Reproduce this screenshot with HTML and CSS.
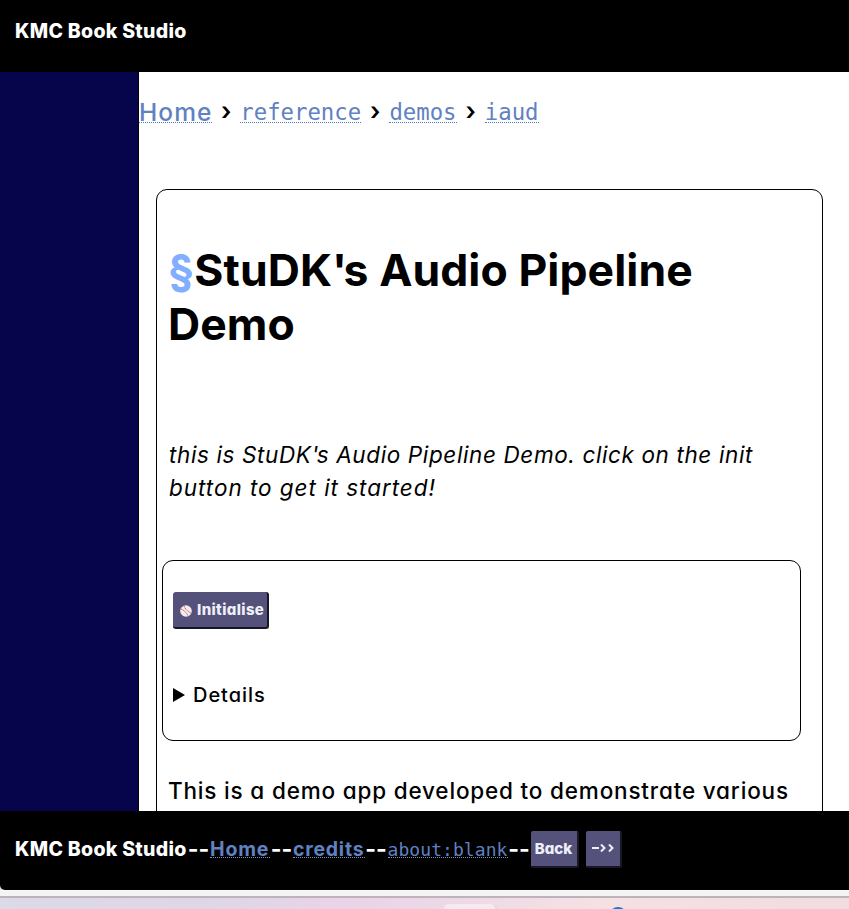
FILE: index.html
```html
<!DOCTYPE html>
<html lang="en">
<head>
<meta charset="utf-8">
<title>KMC Book Studio</title>
<link rel="stylesheet" href="styles.css">
</head>
<body>
<header class="topbar"><span class="brand">KMC Book Studio</span></header>
<div class="workspace">
  <aside class="sidebar"></aside>
  <main class="content">
    <nav class="crumbs"><a class="home">Home</a><i class="sep">›</i><a class="code">reference</a><i class="sep">›</i><a class="code">demos</a><i class="sep">›</i><a class="code">iaud</a></nav>
    <article class="card">
      <h1><a class="mark">§</a>StuDK<span class="apos">'</span>s Audio Pipeline<br>Demo</h1>
      <p class="intro">this is StuDK<span class="apos-small">'</span>s Audio Pipeline Demo. click on the init<br><span class="intro-end">button to get it started!</span></p>
      <section class="panel">
        <button class="btn init"><svg class="ball" viewBox="0 0 12 12"><circle cx="6" cy="6" r="5.8" fill="#f0edf0"/><path d="M.7 4C3.500 4.500 7.500 8.500 8 11.200M4 .8C4.500 3.500 8.500 7.500 11.300 8" fill="none" stroke="#d8574f" stroke-width="1" stroke-dasharray="1.500 .6"/></svg><span>Initialise</span></button>
        <div class="details"><svg viewBox="0 0 12 14"><path d="M0 0L12 7L0 14Z"/></svg><span>Details</span></div>
      </section>
      <p class="about">This is a demo app developed to demonstrate various</p>
    </article>
  </main>
</div>
<footer class="bottombar"><span class="brand">KMC Book Studio</span><span class="dash">--</span><a class="flink fhome">Home</a><span class="dash">--</span><a class="flink fcredits">credits</a><span class="dash">--</span><a class="flink blank">about:blank</a><span class="dash">--</span><button class="btn back">Back</button><button class="btn forward"><svg viewBox="0 0 24 12"><path d="M1 6H8M10 2.500L13.500 6L10 9.500M18 2.500L21.500 6L18 9.500" fill="none" stroke="#efeff8" stroke-width="2"/></svg></button></footer>
<div class="window-edge"></div>
<div class="taskbar"><div class="tab"></div><div class="app-icon"></div></div>
</body>
</html>
```
FILE: styles.css
```css
* { box-sizing: border-box; }
html, body { height: 100%; margin: 0; }
body { display: flex; flex-direction: column; overflow: hidden; background: #e6dbe8; color: #000; font-family: Inter, "Liberation Sans", sans-serif; font-feature-settings: "cv11"; white-space: nowrap; }
.topbar { height: 72px; flex: none; background: #000; color: #fff; padding: 17px 15px; }
.brand { display: inline-block; width: 172px; font-size: 19.5px; font-weight: 800; line-height: 28px; letter-spacing: .3px; }
.workspace { display: flex; height: 739px; flex: none; background: #fff; overflow: hidden; }
.sidebar { width: 139px; flex: none; background: #06054b; border-right: 1px solid #000; }
.content { flex: 1; padding-top: 20px; }
.crumbs { display: flex; height: 40px; line-height: 40px; align-items: center; }
.crumbs a { color: #6081c2; line-height: 26px; height: 24px; margin-top: -3px; border-bottom: 1px dotted #5577bb; }
.crumbs .home { width: 73px; font-size: 24.5px; font-weight: 500; letter-spacing: 1.1px; }
.crumbs .code { font-family: "DejaVu Sans Mono", monospace; font-size: 22.3px; line-height: 27px; }
.sep { font-style: normal; font-size: 25px; font-weight: 600; width: 28.3px; text-align: center; margin-top: -3px; }
.card { width: 667px; height: 800px; margin: 57px 0 0 17px; border: 1px solid #000; border-radius: 11px; padding: 0 5px; }
h1 { margin: 53px 0 0 6px; font-size: 44.5px; line-height: 54px; font-weight: 700; letter-spacing: .07px; font-feature-settings: normal; }
.mark { color: #81aeff; }
.apos { letter-spacing: -3.5px; }
.intro { margin: 87px 0 0 7px; font-size: 22.5px; line-height: 33px; font-style: italic; font-weight: 450; letter-spacing: .62px; }
.apos-small { letter-spacing: -1.5px; }
.intro-end { letter-spacing: .96px; }
.panel { width: 639px; height: 181px; margin-top: 56px; border: 1px solid #000; border-radius: 11px; padding: 31px 10px; }
.btn { font-family: inherit; font-feature-settings: inherit; color: #efeff8; background: #54527b; border: 0 solid #171726; font-weight: 800; margin: 0; padding: 0; }
.init { display: flex; align-items: center; gap: 5px; width: 96px; height: 37px; padding: 0 0 0 7px; border-width: 0 2px 2px 0; border-radius: 3px; font-size: 15px; letter-spacing: .35px; }
.ball { width: 12px; height: 12px; flex: none; margin-top: 3px; }
.details { display: flex; align-items: center; height: 32px; margin-top: 50px; font-size: 20px; font-weight: 450; letter-spacing: .95px; }
.details svg { width: 12px; height: 14px; margin-right: 8px; }
.about { margin: 33px 0 0 6px; font-size: 22.5px; line-height: 33px; font-weight: 450; letter-spacing: .82px; }
.bottombar { display: flex; align-items: flex-start; height: 79px; flex: none; background: #000; color: #fff; padding: 20px 15px; line-height: 37px; font-size: 19.5px; font-weight: 700; border-bottom-left-radius: 5px; }
.bottombar .brand, .bottombar .dash { line-height: 37px; }
.dash { width: 23px; flex: none; display: flex; justify-content: center; font-size: 23px; }
.flink { color: #6081c2; height: 27px; border-bottom: 1px dotted #7892c8; flex: none; }
.fhome { width: 60px; letter-spacing: .85px; }
.fcredits { width: 71.5px; letter-spacing: .75px; }
.blank { width: 120px; font-family: "DejaVu Sans Mono", monospace; font-weight: 400; font-size: 18px; letter-spacing: .07px; line-height: 38px; }
.back, .forward { height: 37px; flex: none; border-width: 0 2px 2px 0; border-radius: 2px; }
.back { width: 48px; font-size: 15px; }
.forward { width: 36px; margin-left: 7px; }
.forward svg { width: 24px; height: 12px; }
.window-edge { height: 8px; flex: none; background: #f5f4f5; border-top: 1px solid #f8f8f8; border-bottom: 2px solid #bdb3ba; }
.taskbar { flex: 1; display: flex; background: linear-gradient(90deg, #dcd9e8 0, #dfd6e8 27%, #e9d3e8 39%, #ecd9e6 53%, #f5e1e4 70%, #f1dcdf 100%); overflow: hidden; }
.tab { width: 51px; height: 20px; margin: 6px 0 0 444px; border-radius: 5px; background: #f6eaf0; box-shadow: 4px 1px 0 #ead9e0; }
.app-icon { width: 18px; height: 18px; margin: 9px 0 0 114px; border-radius: 50%; background: #087bd4; }
```
